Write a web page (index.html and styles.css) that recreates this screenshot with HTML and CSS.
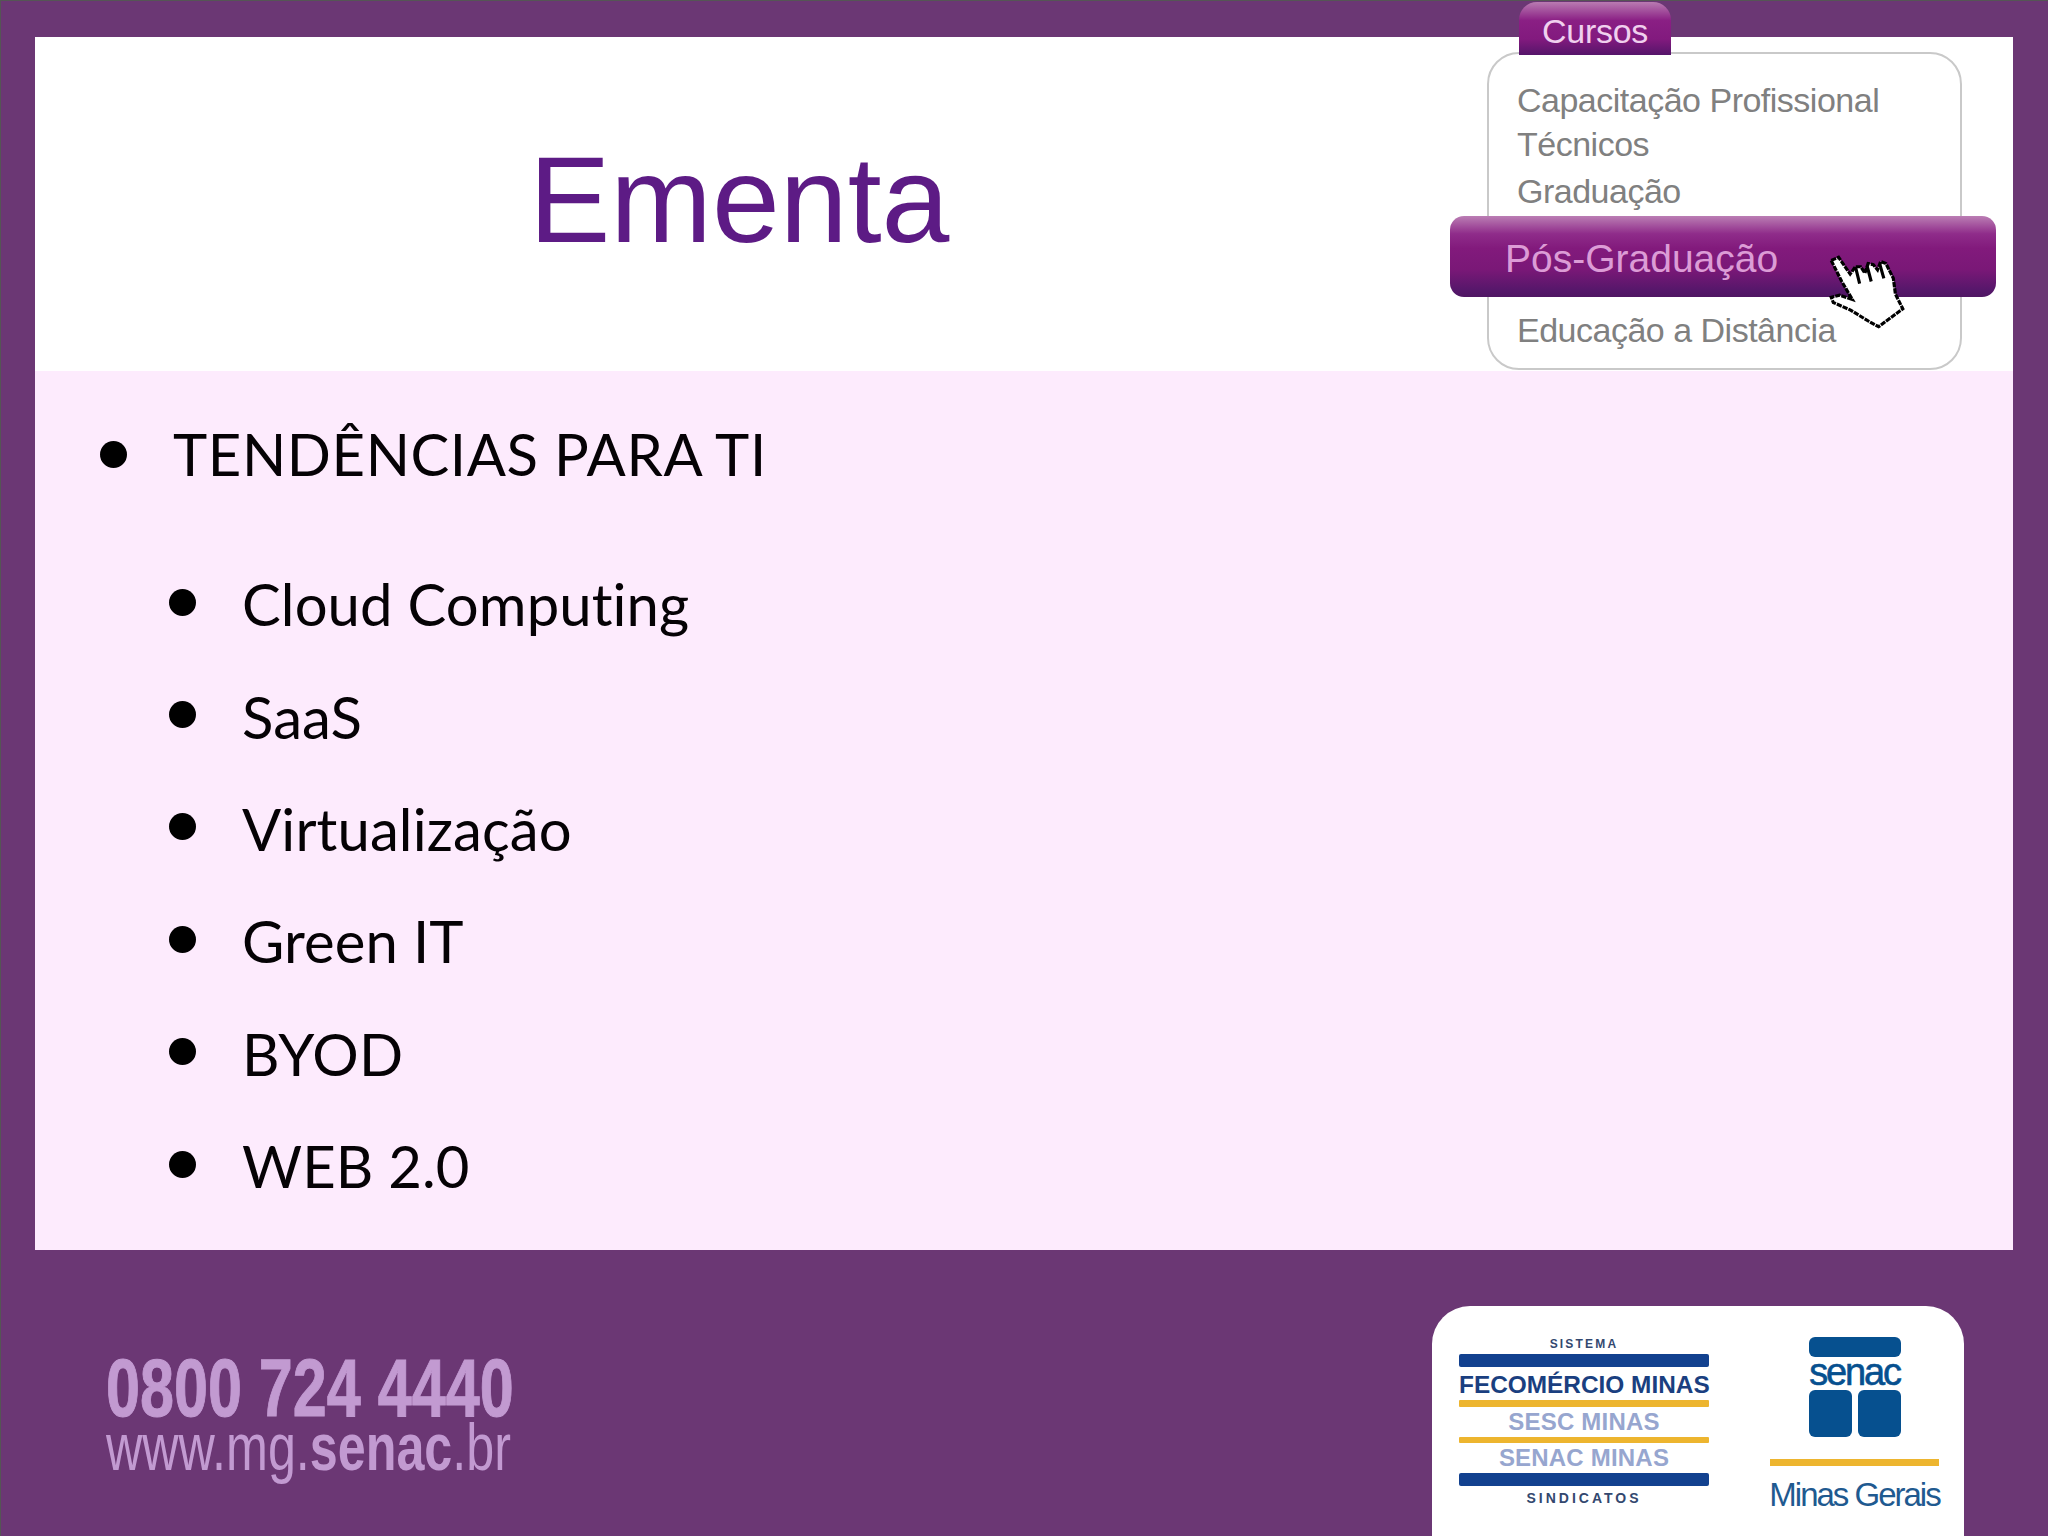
FILE: index.html
```html
<!DOCTYPE html>
<html lang="pt-BR">
<head>
<meta charset="utf-8">
<title>Ementa</title>
<link rel="stylesheet" href="styles.css">
</head>
<body>
<main class="slide">
  <header class="head">
    <h1 class="title">Ementa</h1>
  </header>
  <section class="content">
    <ul class="topics">
      <li class="topic"><span class="dot"></span>TENDÊNCIAS PARA TI</li>
    </ul>
    <ul class="subtopics">
      <li class="subtopic"><span class="dot"></span>Cloud Computing</li>
      <li class="subtopic"><span class="dot"></span>SaaS</li>
      <li class="subtopic"><span class="dot"></span>Virtualização</li>
      <li class="subtopic"><span class="dot"></span>Green IT</li>
      <li class="subtopic"><span class="dot"></span>BYOD</li>
      <li class="subtopic"><span class="dot"></span>WEB 2.0</li>
    </ul>
  </section>
  <footer class="foot">
    <div class="contact">
      <div class="phone">0800 724 4440</div>
      <div class="url">www.mg.<b>senac</b>.br</div>
    </div>
    <div class="card">
      <div class="sys">
        <div class="sys-small">SISTEMA</div>
        <div class="bar-blue"></div>
        <div class="sys-main">FECOMÉRCIO MINAS</div>
        <div class="bar-yellow"></div>
        <div class="sys-light">SESC MINAS</div>
        <div class="bar-yellow"></div>
        <div class="sys-light">SENAC MINAS</div>
        <div class="bar-blue"></div>
        <div class="sys-small sys-bottom">SINDICATOS</div>
      </div>
      <div class="senac">
        <div class="logo-top"></div>
        <div class="logo-word">senac</div>
        <div class="logo-squares"><span></span><span></span></div>
        <div class="logo-rule"></div>
        <div class="logo-region">Minas Gerais</div>
      </div>
    </div>
  </footer>
</main>
<aside class="menu">
  <div class="menu-tab">Cursos</div>
  <div class="menu-item item-1">Capacitação Profissional</div>
  <div class="menu-item item-2">Técnicos</div>
  <div class="menu-item item-3">Graduação</div>
  <div class="menu-active">Pós-Graduação</div>
  <div class="menu-item item-4">Educação a Distância</div>
  <svg class="hand" viewBox="0 0 76 72" width="80" height="76">
    <path class="hand-shape" d="M4 6 L11 3 L22 19 L27 12 L32 12 L36 18 L39 9 L44 10 L48 15 L51 7 L56 9 L63 23 L65 38 L72 52 L49 69 L40 64 L22 53 L6 46 L4 41 L12 39 L24 43 L14 26 Z"/>
    <path class="hand-line" d="M27 12 L31 28 M38 11 L42 26 M50 9 L54 23"/>
  </svg>
</aside>
</body>
</html>
```
FILE: styles.css
```css
* { box-sizing: border-box; }
html, body { margin: 0; padding: 0; }
body {
  width: 2048px;
  height: 1536px;
  background: #6b3774;
  overflow: hidden;
  position: relative;
  font-family: "Liberation Sans", Arial, sans-serif;
}
.slide {
  height: 1536px;
  padding: 36px 35px 0 34px;
  display: flex;
  flex-direction: column;
  border-top: 1px solid #555;
  border-left: 1px solid #555;
}
.head {
  height: 334px;
  background: #fff;
  display: flex;
  align-items: center;
  padding: 0 0 8px 494px;
}
.title {
  margin: 0;
  font-size: 122px;
  font-weight: 400;
  line-height: 1.15;
  color: #5d1b85;
}
.content {
  height: 879px;
  background: #fdebfd;
  padding-top: 27px;
  font-family: Lato, sans-serif;
  color: #050205;
}
.topics, .subtopics { list-style: none; margin: 0; padding: 0; }
.topics { padding-left: 65px; margin-bottom: 38px; }
.subtopics { padding-left: 134px; }
.topic, .subtopic {
  display: flex;
  align-items: center;
  height: 112px;
  line-height: 112px;
  font-size: 58px;
  white-space: nowrap;
}
.topic { letter-spacing: 0.6px; }
.subtopic { height: 112.4px; letter-spacing: 0.1px; }
.dot {
  width: 27px;
  height: 27px;
  border-radius: 50%;
  background: #000;
  flex: none;
  margin-right: 46px;
}
.subtopic .dot { margin-right: 46px; margin-bottom: 4px; }

.foot {
  flex: 1;
  display: flex;
  justify-content: space-between;
  padding-right: 49px;
}
.contact {
  padding: 108px 0 0 71px;
  color: #c29ad1;
  white-space: nowrap;
}
.phone {
  font-size: 82px;
  font-weight: 700;
  line-height: 60px;
  -webkit-text-stroke: 1px #c29ad1;
  transform: scaleX(0.745);
  transform-origin: left center;
}
.url {
  font-size: 67px;
  line-height: 58px;
  transform: scaleX(0.75);
  transform-origin: left center;
}
.card {
  width: 532px;
  margin-top: 56px;
  background: #fff;
  border-radius: 38px 38px 0 0;
  display: flex;
  padding: 28px 0 0 27px;
  gap: 61px;
}
.sys {
  width: 250px;
  display: flex;
  flex-direction: column;
  align-items: stretch;
  text-align: center;
  font-weight: 700;
  white-space: nowrap;
}
.sys-small {
  height: 20px;
  line-height: 20px;
  font-size: 12px;
  letter-spacing: 2.2px;
  color: #33486f;
}
.sys-bottom { height: 25px; line-height: 25px; font-size: 14px; letter-spacing: 3px; }
.bar-blue { height: 13px; background: #12418f; border-radius: 2px; }
.bar-yellow { height: 6.5px; background: #edb52f; border-radius: 1px; }
.sys-main {
  height: 33px;
  line-height: 35px;
  font-size: 24.4px;
  color: #1a3f80;
}
.sys-light {
  height: 30px;
  line-height: 30px;
  font-size: 24px;
  letter-spacing: 0.2px;
  color: #97a6cf;
}
.senac {
  width: 169px;
  padding-top: 3px;
  display: flex;
  flex-direction: column;
  align-items: center;
}
.logo-top {
  width: 92px;
  height: 20px;
  background: #06508f;
  border-radius: 6px;
}
.logo-word {
  height: 28px;
  margin-bottom: 5px;
  line-height: 30px;
  font-size: 38px;
  letter-spacing: -2.2px;
  color: #06508f;
  -webkit-text-stroke: 0.6px #06508f;
}
.logo-squares { display: flex; gap: 6px; }
.logo-squares span {
  width: 43px;
  height: 47px;
  background: #06508f;
  border-radius: 6px;
}
.logo-rule {
  width: 169px;
  height: 7px;
  margin-top: 22px;
  background: #edb52f;
}
.logo-region {
  margin-top: 9px;
  line-height: 40px;
  font-size: 33px;
  letter-spacing: -2px;
  color: #1f5a90;
  white-space: nowrap;
}

/* Menu picture lying over the slide header */
.menu {
  position: absolute;
  left: 1487px;
  top: 52px;
  width: 475px;
  height: 318px;
  background: #fff;
  border: 2px solid #c9c9c9;
  border-radius: 32px;
}
.menu-tab {
  position: absolute;
  left: 30px;
  top: -52px;
  width: 152px;
  height: 53px;
  border-radius: 18px 18px 0 0;
  background: linear-gradient(#b97bb2 0, #8a1f84 35%, #821a7e 70%, #55156a 100%);
  color: #f0d0ee;
  font-size: 34px;
  letter-spacing: -0.3px;
  line-height: 58px;
  text-align: center;
}
.menu-item {
  position: absolute;
  left: 28px;
  font-size: 34px;
  letter-spacing: -0.5px;
  line-height: 40px;
  color: #808080;
  white-space: nowrap;
}
.item-1 { top: 26px; }
.item-2 { top: 70px; }
.item-3 { top: 117px; }
.item-4 { top: 256px; }
.menu-active {
  position: absolute;
  left: -39px;
  top: 162px;
  width: 546px;
  height: 81px;
  padding-left: 55px;
  border-radius: 14px;
  background: linear-gradient(#bb7eb4 0, #8f2c8a 22%, #821a7c 40%, #7a1877 66%, #55176a 92%, #4f1663 100%);
  color: #dc9cd6;
  font-size: 39px;
  line-height: 85px;
  white-space: nowrap;
}
.hand {
  position: absolute;
  left: 338px;
  top: 200px;
}
.hand-shape {
  fill: #fff;
  stroke: #000;
  stroke-width: 3;
  stroke-dasharray: 5 1;
  stroke-linejoin: miter;
}
.hand-line { fill: none; stroke: #000; stroke-width: 3; }
```
